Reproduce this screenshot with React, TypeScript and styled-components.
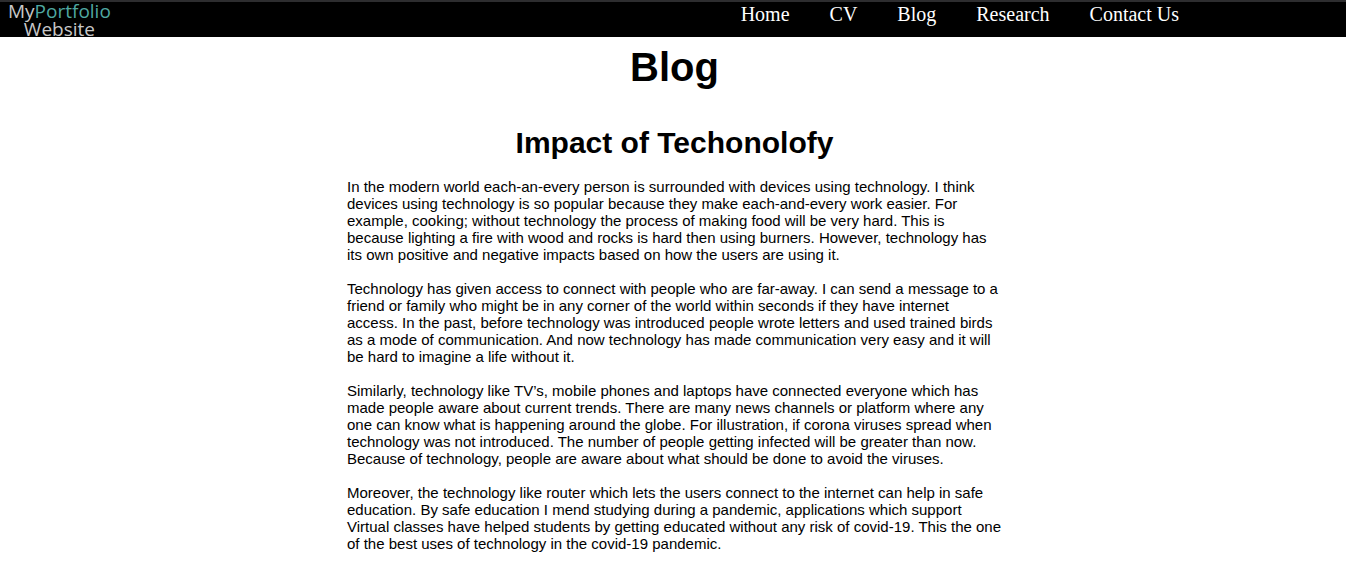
import React from "react";
import styled, { createGlobalStyle } from "styled-components";

const GlobalStyle = createGlobalStyle`
  body {
    margin: 0;
    background: #fff;
    color: #000;
    font-family: "Liberation Sans", Arial, sans-serif;
  }
`;

const TopBar = styled.header`
  display: flex;
  justify-content: space-between;
  height: 37px;
  box-sizing: border-box;
  border-top: 2px solid #2d2d2f;
  background: #000;
`;

const Logo = styled.a`
  margin-left: 8px;
  color: #c8c8c8;
  font: 400 19px/18px "Open Sans", sans-serif;
  text-align: center;
  text-decoration: none;
`;

const LogoLine = styled.span`
  display: block;
`;

const LogoAccent = styled.span`
  color: #4fa8a2;
`;

const Nav = styled.nav`
  display: flex;
  gap: 40px;
  margin-right: 167px;
`;

const NavLink = styled.a`
  color: #fff;
  font: 20px/24px "Liberation Serif", "Times New Roman", serif;
  text-decoration: none;
`;

const Article = styled.main`
  max-width: 655px;
  margin: 0 auto;
  padding: 0 8px 0 11px;
`;

const PageTitle = styled.h1`
  margin: 6px 0 0;
  font-size: 40px;
  line-height: 48px;
  text-align: center;
`;

const PostTitle = styled.h2`
  margin: 35px 0 18px;
  font-size: 30px;
  line-height: 34px;
  text-align: center;
`;

const Paragraph = styled.p`
  margin: 0 0 17px;
  font-size: 15px;
  line-height: 17px;
`;

const links = ["Home", "CV", "Blog", "Research", "Contact Us"];

const paragraphs = [
  "In the modern world each-an-every person is surrounded with devices using technology. I think devices using technology is so popular because they make each-and-every work easier. For example, cooking; without technology the process of making food will be very hard. This is because lighting a fire with wood and rocks is hard then using burners. However, technology has its own positive and negative impacts based on how the users are using it.",
  "Technology has given access to connect with people who are far-away. I can send a message to a friend or family who might be in any corner of the world within seconds if they have internet access. In the past, before technology was introduced people wrote letters and used trained birds as a mode of communication. And now technology has made communication very easy and it will be hard to imagine a life without it.",
  "Similarly, technology like TV’s, mobile phones and laptops have connected everyone which has made people aware about current trends. There are many news channels or platform where any one can know what is happening around the globe. For illustration, if corona viruses spread when technology was not introduced. The number of people getting infected will be greater than now. Because of technology, people are aware about what should be done to avoid the viruses.",
  "Moreover, the technology like router which lets the users connect to the internet can help in safe education. By safe education I mend studying during a pandemic, applications which support Virtual classes have helped students by getting educated without any risk of covid-19. This the one of the best uses of technology in the covid-19 pandemic.",
];

export default function App() {
  return (
    <>
      <GlobalStyle />
      <TopBar>
        <Logo href="#home">
          <LogoLine>
            My<LogoAccent>Portfolio</LogoAccent>
          </LogoLine>
          <LogoLine>Website</LogoLine>
        </Logo>
        <Nav>
          {links.map((label) => (
            <NavLink key={label} href="#">
              {label}
            </NavLink>
          ))}
        </Nav>
      </TopBar>
      <Article>
        <PageTitle>Blog</PageTitle>
        <PostTitle>Impact of Techonolofy</PostTitle>
        {paragraphs.map((text) => (
          <Paragraph key={text}>{text}</Paragraph>
        ))}
      </Article>
    </>
  );
}
